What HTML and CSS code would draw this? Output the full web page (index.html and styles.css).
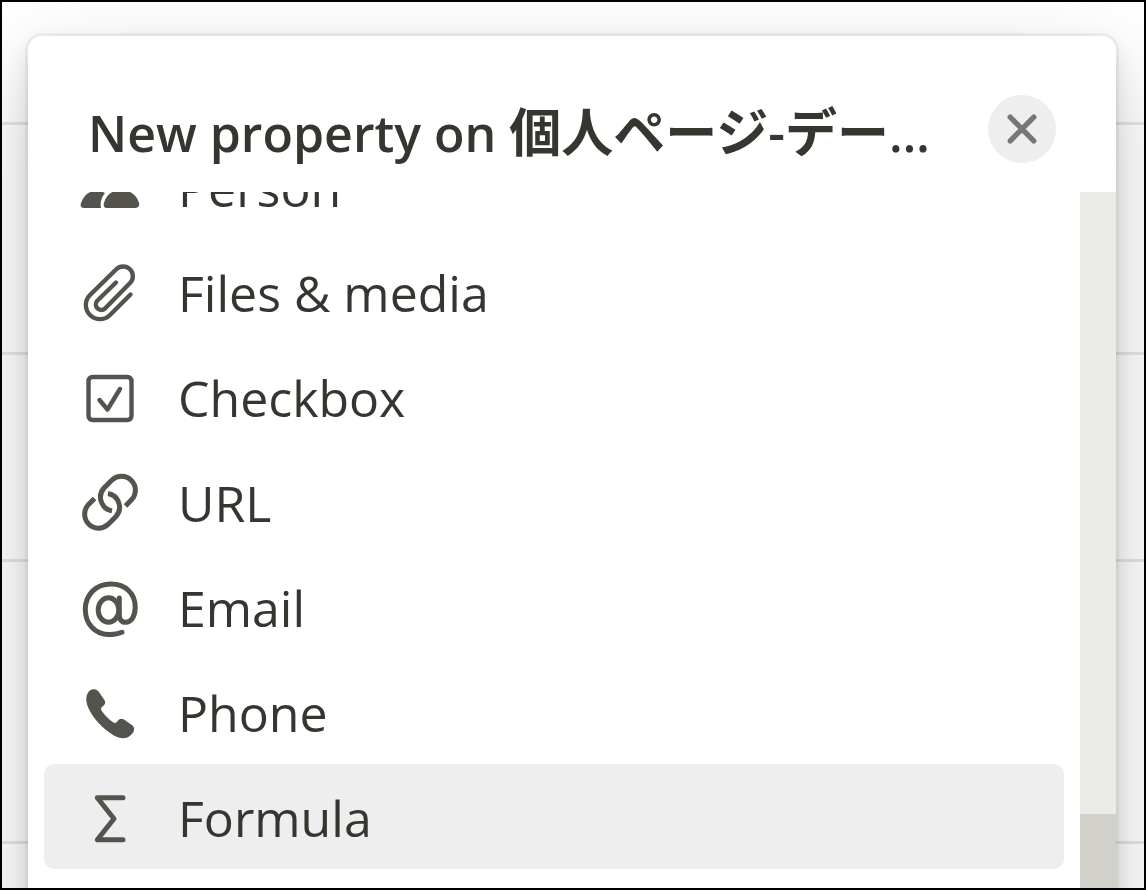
FILE: index.html
```html
<!DOCTYPE html>
<html lang="en">
<head>
    <meta charset="UTF-8">
    <meta name="viewport" content="width=device-width, initial-scale=1.0">
    <title>New property</title>
    <link rel="stylesheet" href="styles.css">
</head>
<body>
    <div class="page">
        <div class="line first"></div>
        <div class="line second"></div>
        <div class="line third"></div>
        <div class="line fourth"></div>

        <div class="popup">
            <div class="header">
                <h1>New property on <span lang="ja">個人ページ-データベース</span></h1>
                <button class="close" aria-label="Close">
                    <svg viewBox="0 0 28 28"><path d="M3 3L25 25M25 3L3 25"/></svg>
                </button>
            </div>
            <div class="content">
                <div class="list">
                    <button class="item">
                        <svg class="solid" viewBox="0 0 60 60"><circle cx="41" cy="20" r="11"/><circle cx="16" cy="22" r="9"/><path d="M27 51C24 51 23 49 24 46C26 38 32 33 41 33C50 33 57 38 59 46C60 49 58 51 55 51Z"/><path d="M4 51C1 51 0 49 1 46C4 38 9 34 16 34C20 34 23 35 25 36C21 41 20 46 21 51Z"/></svg>
                        <span>Person</span>
                    </button>
                    <button class="item">
                        <svg viewBox="0 0 60 60"><path d="M50.5 32.5L30 53A14 14 0 0 1 10 33L36.3 7.3A9.6 9.6 0 0 1 50 21L25 46.5A5.5 5.5 0 0 1 17 39L36 20.5"/></svg>
                        <span>Files &amp; media</span>
                    </button>
                    <button class="item">
                        <svg viewBox="0 0 60 60"><rect x="8.5" y="10" width="43" height="43" rx="4"/><path d="M19.5 33L27.5 42.5L40 22"/></svg>
                        <span>Checkbox</span>
                    </button>
                    <button class="item">
                        <svg class="bold" viewBox="0 0 60 60"><path class="butt" d="M14.5 26.5L8.5 32.6A13.9 13.9 0 0 0 28 52.4L36 44.4A13.9 13.9 0 0 0 28 21.5"/><path class="butt" d="M45.5 33.9L51.5 27.8A13.9 13.9 0 0 0 32 8L24 16A13.9 13.9 0 0 0 32 38.9"/></svg>
                        <span>URL</span>
                    </button>
                    <button class="item">
                        <svg class="bold" viewBox="0 0 60 60"><path d="M42 55.3C38 57 34 57.6 30 57.6C15 57.6 5.3 47 5.3 32.5C5.3 17.5 16 7 31 7C45.5 7 55.2 16.5 55.2 30C55.2 39 51.5 45.3 45.7 45.3C41.5 45.3 39.3 42.5 39.3 38V21"/><ellipse cx="28.5" cy="33" rx="10.3" ry="12.3"/></svg>
                        <span>Email</span>
                    </button>
                    <button class="item">
                        <svg class="solid" viewBox="0 0 60 60"><path d="M13.5 7.2C16 7 18 8.3 19.3 10.5L24.7 18.5C26 21 24.5 23 22.5 24.5C20.7 25.8 20.7 27.3 21.8 29C25 33.5 29 37.5 33 40.3C34.5 41.3 36 41 37 39.7C38.8 37 41 35.8 43.5 37.3L51.5 42.7C54.5 44.8 55 48 52.7 51C50 54.7 46.5 56.4 42.5 56.2C37 55.8 31.5 52.5 26 48C18.5 41.7 11.5 33.5 8.2 25.5C5.7 19.5 5.6 14 8.5 10C9.9 8.2 11.5 7.3 13.5 7.2Z"/></svg>
                        <span>Phone</span>
                    </button>
                    <button class="item selected">
                        <svg class="bold" viewBox="0 0 60 60"><path d="M43 10.7H17.3L34 31.7L17.3 52.7H43"/></svg>
                        <span>Formula</span>
                    </button>
                </div>
                <div class="scrollbar"><div class="thumb"></div></div>
            </div>
        </div>
    </div>
</body>
</html>
```

FILE: styles.css
```css
* {
    box-sizing: border-box;
}
body {
    margin: 0;
    font-family: "Open Sans", "Noto Sans CJK JP", sans-serif;
    color: #37352f;
}
.page {
    position: relative;
    height: 100vh;
    border: 2px solid #000;
    background-color: #fff;
    overflow: hidden;
}
.line {
    border-bottom: 3px solid #e6e6e4;
}
.line.first {
    height: 123px;
}
.line.second {
    height: 230px;
}
.line.third {
    height: 207px;
}
.line.fourth {
    height: 282px;
}
/* panel runs past the bottom edge */
.popup {
    position: absolute;
    top: 34px;
    left: 26px;
    right: 28px;
    bottom: -80px;
    display: flex;
    flex-direction: column;
    background-color: #fff;
    border-radius: 14px;
    box-shadow: 0 0 0 3px rgba(15, 15, 15, 0.05), 0 12px 24px rgba(15, 15, 15, 0.1), 0 36px 96px rgba(15, 15, 15, 0.2);
}
.header {
    flex: none;
    display: flex;
    align-items: center;
    justify-content: space-between;
    gap: 48px;
    height: 156px;
    padding: 30px 60px 0 60px;
}
h1 {
    flex: 1;
    min-width: 0;
    margin: 0;
    padding-top: 6px;
    font-size: 50px;
    line-height: 72px;
    font-weight: 600;
    white-space: nowrap;
    overflow: hidden;
    text-overflow: ellipsis;
}
h1 span {
    font-size: 52px;
}
.close {
    flex: none;
    display: flex;
    align-items: center;
    justify-content: center;
    width: 68px;
    height: 68px;
    padding: 0;
    border: none;
    border-radius: 50%;
    background-color: #eeeeee;
    cursor: pointer;
}
.close svg {
    width: 30px;
    height: 30px;
    stroke: #787774;
    stroke-width: 5;
}
.content {
    flex: 1;
    display: flex;
    min-height: 0;
    overflow: hidden;
}
.list {
    flex: 1;
    margin-top: -58px;
    padding: 0 16px;
}
.item {
    display: flex;
    align-items: center;
    gap: 38px;
    width: 100%;
    height: 105px;
    padding: 0 36px;
    border: none;
    border-radius: 10px;
    background: none;
    color: inherit;
    font-family: inherit;
    font-size: 50px;
    line-height: 72px;
    text-align: left;
    cursor: pointer;
}
.item span {
    padding-top: 3px;
}
.item.selected,
.item:hover {
    background-color: #eeeeee;
}
svg {
    flex: none;
    width: 60px;
    height: 60px;
    fill: none;
    stroke: #55534e;
    stroke-width: 4.4;
    stroke-linecap: round;
    stroke-linejoin: round;
}
.solid {
    fill: #55534e;
    stroke: none;
}
.bold {
    stroke-width: 5;
}
.butt {
    stroke-linecap: butt;
}
.scrollbar {
    width: 36px;
    padding-top: 622px;
    background-color: #ebebe7;
}
.thumb {
    height: 100%;
    background-color: #d1d0ca;
}
```
